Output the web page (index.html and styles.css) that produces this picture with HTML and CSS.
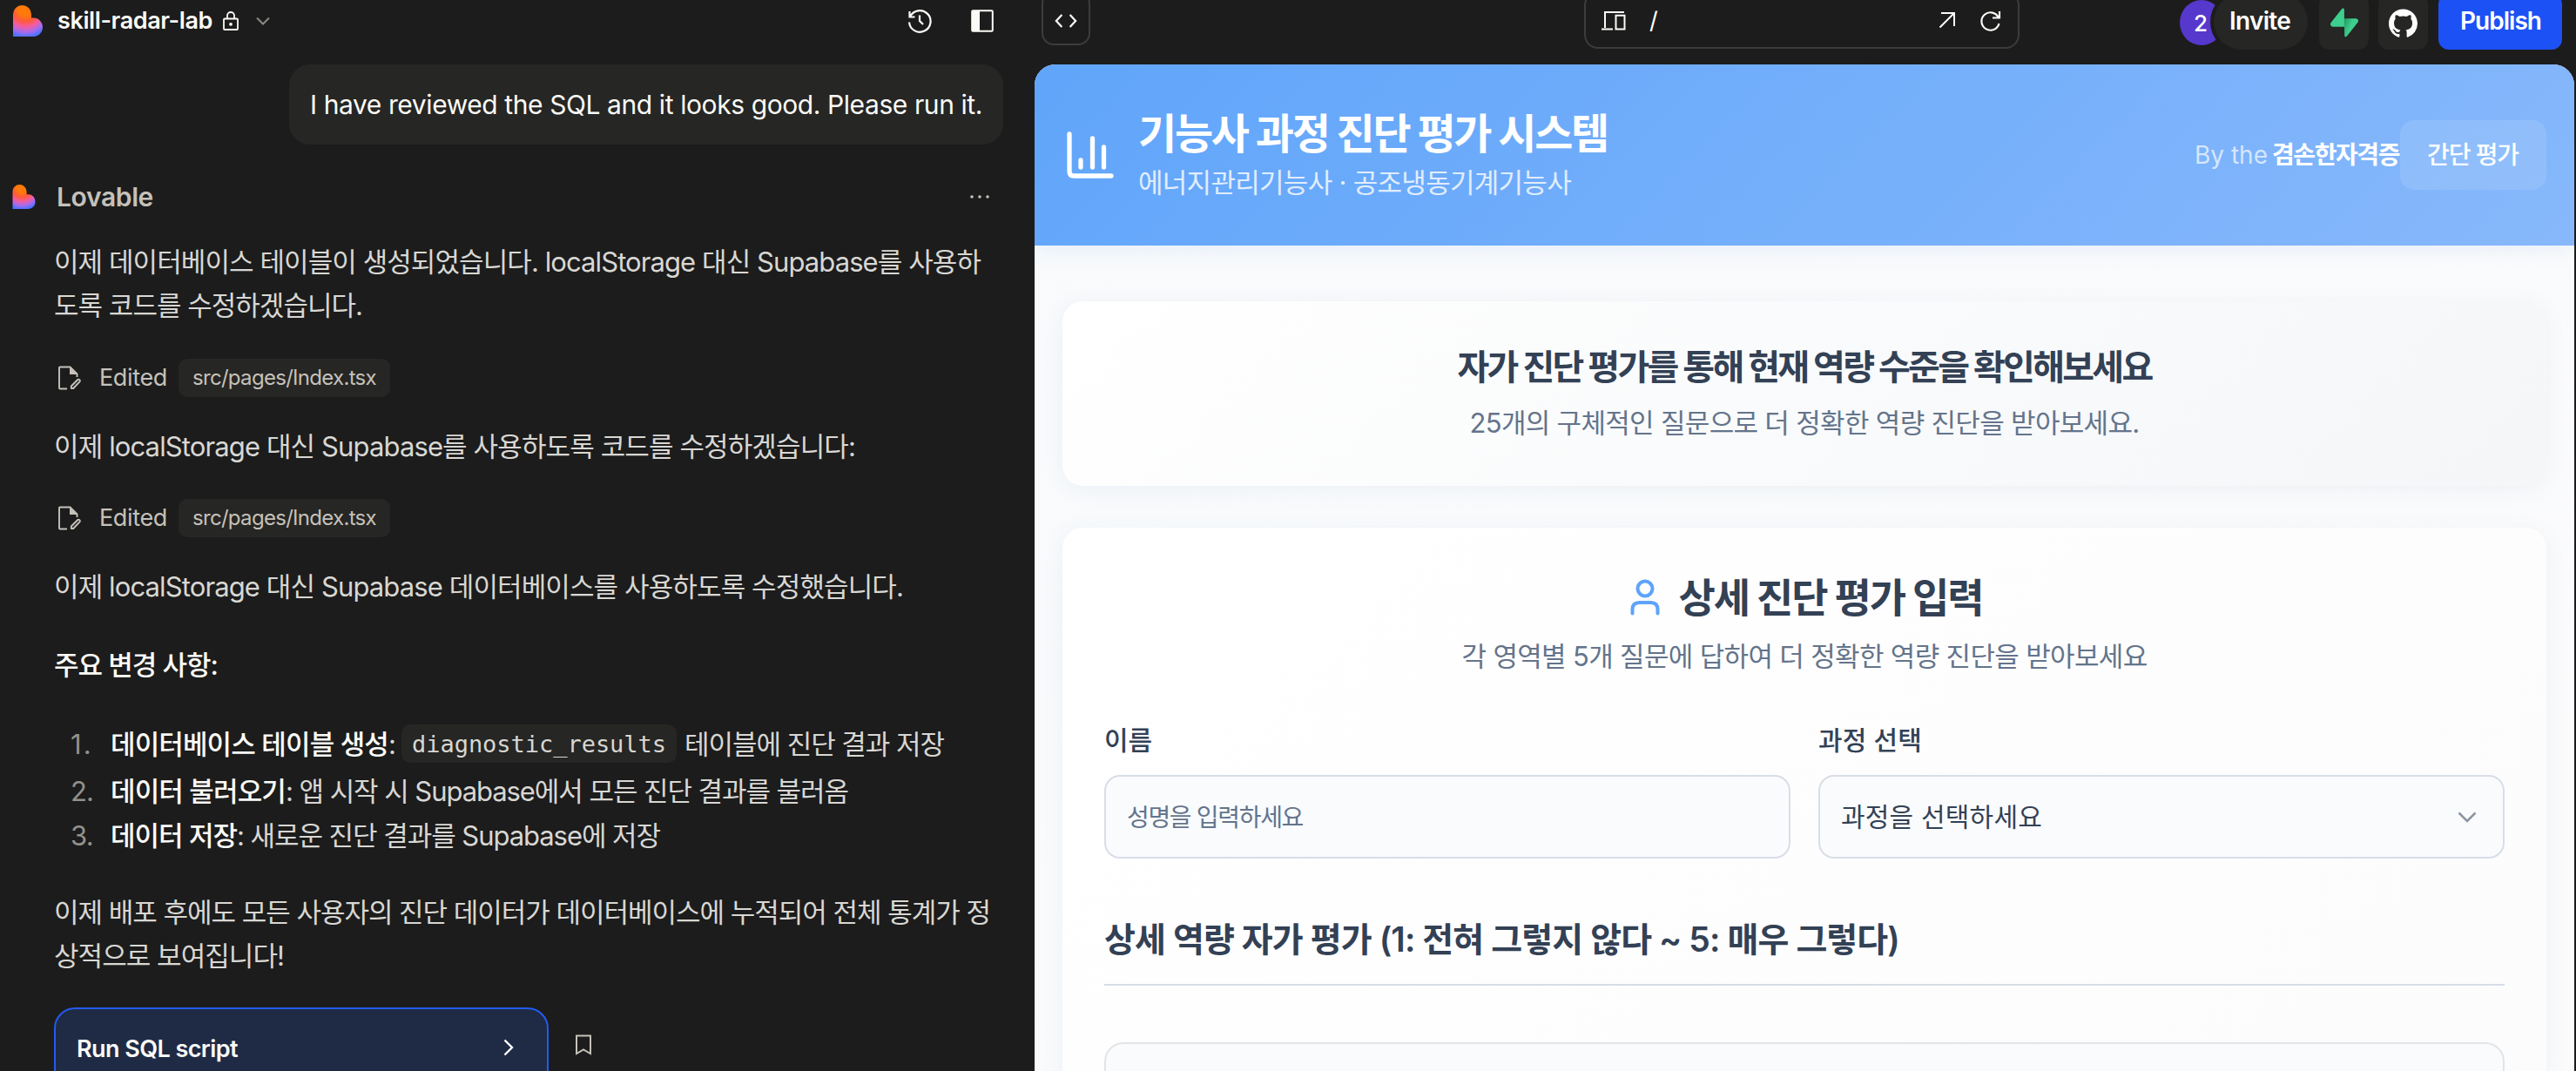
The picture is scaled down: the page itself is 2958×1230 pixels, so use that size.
FILE: index.html
```
<!DOCTYPE html>
<html lang="ko">
<head>
<meta charset="utf-8">
<title>skill-radar-lab</title>
<link rel="stylesheet" href="styles.css">
</head>
<body>
<svg width="0" height="0" class="defs" aria-hidden="true">
  <defs>
    <radialGradient id="heart" cx="42%" cy="8%" r="98%">
      <stop offset="0.25" stop-color="#ff7a0a"/>
      <stop offset="0.45" stop-color="#fe5a3c"/>
      <stop offset="0.62" stop-color="#f45ca0"/>
      <stop offset="0.8" stop-color="#a56cee"/>
      <stop offset="0.95" stop-color="#4b73ff"/>
    </radialGradient>
    <linearGradient id="bolt" x1="0" y1="0" x2="1" y2="0.500"><stop offset="0" stop-color="#249361"/><stop offset="0.55" stop-color="#3ecf8e"/></linearGradient>
    <symbol id="logo" viewBox="0 0 34 36"><path fill="url(#heart)" d="M0 10.500A10.500 10.500 0 0 1 21 10.500V14.500H23.500A10.500 10.700 0 0 1 23.500 36H0Z"/></symbol>
    <symbol id="edit" viewBox="0 0 28 28"><path d="M12 26.500H4Q3 26.500 3 25.500V2.500Q3 1.500 4 1.500H15.500L23.500 9.500V13" fill="none" stroke="currentColor" stroke-width="1.900"/><path d="M15 1.500V10H23.500Z" fill="currentColor"/><path d="M16.800 23.500 24.300 16Q25.300 15.200 26.300 16.200T26.500 18.300L19.200 26H16.800Z" fill="none" stroke="currentColor" stroke-width="1.900" stroke-linejoin="round"/></symbol>
  </defs>
</svg>
<div class="app">
  <section class="chat">
    <header class="chat-top">
      <svg class="brand" viewBox="0 0 34 36"><use href="#logo"/></svg>
      <span class="project t" data-w="178">skill-radar-lab</span>
      <svg class="lock" viewBox="0 0 18 22" fill="none" stroke="#fbfaf6" stroke-width="1.800"><rect x="1" y="8.500" width="16" height="12.500" rx="1"/><path d="M5 8.500V5a4 4 0 0 1 8 0V8.500"/><circle cx="9" cy="14.800" r="1" fill="#fbfaf6"/></svg>
      <svg class="chev" viewBox="0 0 16 10" fill="none" stroke="#8b8985" stroke-width="2"><path d="M1 1.500 8 8.500 15 1.500"/></svg>
      <span class="grow"></span>
      <svg class="history" viewBox="0 0 28 28" fill="none" stroke="#fbfaf6" stroke-width="2.200"><path d="M2.500 3V9.500H8.500M3 9.500A12.300 12.300 0 1 1 2 15.500M14 7.500V14L18 18"/></svg>
      <svg class="panel" viewBox="0 0 26 26"><rect x="1.200" y="1.200" width="23.600" height="23.600" rx="1" fill="none" stroke="#fbfaf6" stroke-width="2"/><path d="M1 1H10V25H1Z" fill="#fbfaf6"/></svg>
    </header>
    <div class="bubble"><span class="t" data-w="772">I have reviewed the SQL and it looks good. Please run it.</span></div>
    <div class="author">
      <svg class="brand-s" viewBox="0 0 34 36"><use href="#logo"/></svg>
      <span class="t" data-w="111">Lovable</span>
      <span class="grow"></span>
      <svg class="dots" viewBox="0 0 24 6" fill="#c5c1ba"><circle cx="3" cy="3" r="1.800"/><circle cx="12" cy="3" r="1.800"/><circle cx="21" cy="3" r="1.800"/></svg>
    </div>
    <div class="msg">
      <p><span class="t" data-w="1064">이제 데이터베이스 테이블이 생성되었습니다. localStorage 대신 Supabase를 사용하</span><span class="t" data-w="354">도록 코드를 수정하겠습니다.</span></p>
      <div class="edited"><svg viewBox="0 0 28 28"><use href="#edit"/></svg><span class="t lbl" data-w="78">Edited</span><span class="file"><span class="t" data-w="211">src/pages/Index.tsx</span></span></div>
      <p class="m2"><span class="t" data-w="920">이제 localStorage 대신 Supabase를 사용하도록 코드를 수정하겠습니다:</span></p>
      <div class="edited"><svg viewBox="0 0 28 28"><use href="#edit"/></svg><span class="t lbl" data-w="78">Edited</span><span class="file"><span class="t" data-w="211">src/pages/Index.tsx</span></span></div>
      <p class="m2"><span class="t" data-w="975">이제 localStorage 대신 Supabase 데이터베이스를 사용하도록 수정했습니다.</span></p>
      <p class="m3 strong"><span class="t" data-w="188">주요 변경 사항:</span></p>
      <ol>
        <li><i class="t" data-w="26">1.</i><b class="t" data-w="319">데이터베이스 테이블 생성</b><span class="t" data-w="8">:</span><code><span class="t" data-w="292">diagnostic_results</span></code><span class="t" data-w="298">테이블에 진단 결과 저장</span></li>
        <li><i class="t" data-w="26">2.</i><b class="t" data-w="201">데이터 불러오기</b><span class="t" data-w="646">: 앱 시작 시 Supabase에서 모든 진단 결과를 불러옴</span></li>
        <li><i class="t" data-w="26">3.</i><b class="t" data-w="145">데이터 저장</b><span class="t" data-w="486">: 새로운 진단 결과를 Supabase에 저장</span></li>
      </ol>
      <p><span class="t" data-w="1075">이제 배포 후에도 모든 사용자의 진단 데이터가 데이터베이스에 누적되어 전체 통계가 정</span><span class="t" data-w="264">상적으로 보여집니다!</span></p>
      <div class="run-row">
        <div class="run"><span class="t" data-w="185">Run SQL script</span><svg viewBox="0 0 12 20" fill="none" stroke="#fff" stroke-width="2.400"><path d="M1.500 1.500 10 10 1.500 18.500"/></svg></div>
        <svg class="mark" viewBox="0 0 20 24" fill="none" stroke="#c5c1ba" stroke-width="2"><path d="M2 1.500H18V22L10 17.500 2 22Z"/></svg>
      </div>
    </div>
  </section>
  <section class="side">
    <header class="bar">
      <div class="code"><svg viewBox="0 0 28 18" fill="none" stroke="#fbfaf6" stroke-width="2.400"><path d="M9 1.500 2 9 9 16.500M19 1.500 26 9 19 16.500"/></svg></div>
      <div class="url">
        <svg class="dev" viewBox="0 0 28 24" fill="none" stroke="#fbfaf6" stroke-width="2"><path d="M4 20V2H26M0 21.500H13M16.500 5.800H26.500V21.500H16.500Z"/></svg>
        <span class="slash">/</span><span class="grow"></span>
        <svg class="open" viewBox="0 0 20 20" fill="none" stroke="#fbfaf6" stroke-width="2"><path d="M3 2H18V17M18 2 1.500 18.500"/></svg>
        <svg class="reload" viewBox="0 0 24 26" fill="none" stroke="#fbfaf6" stroke-width="2.200"><path d="M22 2V9.500H14M21 9.500A10.200 10.200 0 1 0 21.500 16"/></svg>
      </div>
      <div class="acts">
        <div class="ava">2</div>
        <div class="invite"><span class="t" data-w="70">Invite</span></div>
        <div class="sq"><svg class="supa" viewBox="0 0 109 113"><path fill="url(#bolt)" d="M63.700 110.300c-2.900 3.600-8.700 1.600-8.700-3L54 40h45.200c8.200 0 12.800 9.500 7.700 15.900z"/><path fill="#3ecf8e" d="M45.300 2.100c2.900-3.600 8.700-1.600 8.700 3l.4 67.200H9.800c-8.200 0-12.800-9.400-7.700-15.800z"/></svg></div>
        <div class="sq"><svg class="gh" viewBox="0 0 16 16" fill="#fff"><path d="M8 0C3.580 0 0 3.580 0 8c0 3.540 2.290 6.530 5.470 7.590.4.070.55-.17.55-.38 0-.19-.01-.82-.01-1.490-2.010.37-2.530-.49-2.690-.94-.09-.23-.48-.94-.82-1.130-.28-.15-.68-.52-.01-.53.63-.01 1.080.58 1.230.82.72 1.210 1.870.87 2.330.66.070-.52.28-.87.510-1.070-1.780-.2-3.640-.89-3.640-3.950 0-.87.310-1.590.82-2.150-.08-.2-.36-1.020.08-2.120 0 0 .67-.21 2.200.82.64-.18 1.320-.27 2-.27s1.360.09 2 .27c1.530-1.040 2.200-.82 2.200-.82.44 1.100.16 1.920.08 2.120.51.56.82 1.270.82 2.150 0 3.070-1.870 3.750-3.650 3.950.29.25.54.73.54 1.480 0 1.070-.01 1.930-.01 2.200 0 .21.15.46.55.38A8.010 8.010 0 0 0 16 8c0-4.420-3.580-8-8-8z"/></svg></div>
        <div class="publish"><span class="t" data-w="93">Publish</span></div>
      </div>
    </header>
    <main class="preview">
      <div class="hero">
        <svg class="chart" viewBox="0 0 54 54" fill="none" stroke="#fff" stroke-width="5.300" stroke-linecap="round" stroke-linejoin="round"><path d="M3 3V46Q3 51 8 51H51M16 41V33M29.500 41V8M42.500 41V18"/></svg>
        <div class="titles"><h1><span class="t" data-w="539">기능사 과정 진단 평가 시스템</span></h1><p><span class="t" data-w="497">에너지관리기능사 · 공조냉동기계기능사</span></p></div>
        <span class="grow"></span>
        <span class="by"><span class="t" data-w="84">By the</span><b class="t" data-w="146">겸손한자격증</b></span>
        <div class="simple"><span class="t" data-w="105">간단 평가</span></div>
      </div>
      <div class="body">
        <div class="card intro"><h2><span class="t" data-w="797">자가 진단 평가를 통해 현재 역량 수준을 확인해보세요</span></h2><p><span class="t" data-w="769">25개의 구체적인 질문으로 더 정확한 역량 진단을 받아보세요.</span></p></div>
        <div class="card form">
          <div class="fh"><svg viewBox="0 0 34 42" fill="none" stroke="#5ea3fb" stroke-width="4" stroke-linecap="round"><circle cx="17" cy="11" r="8.500"/><path d="M2.500 39.500V35Q2.500 27 10.500 27H23.500Q31.500 27 31.500 35V39.500"/></svg><h2><span class="t" data-w="349">상세 진단 평가 입력</span></h2></div>
          <p class="sub"><span class="t" data-w="787">각 영역별 5개 질문에 답하여 더 정확한 역량 진단을 받아보세요</span></p>
          <div class="fields">
            <div><label><span class="t" data-w="55">이름</span></label><div class="input ph"><span class="t" data-w="202">성명을 입력하세요</span></div></div>
            <div><label><span class="t" data-w="119">과정 선택</span></label><div class="input"><span class="t" data-w="231">과정을 선택하세요</span><svg viewBox="0 0 22 13" fill="none" stroke="#8c95a4" stroke-width="2.500"><path d="M1.500 1.500 11 11 20.500 1.500"/></svg></div></div>
          </div>
          <h3><span class="t" data-w="913">상세 역량 자가 평가 (1: 전혀 그렇지 않다 ~ 5: 매우 그렇다)</span></h3>
          <div class="panel-q"></div>
        </div>
      </div>
    </main>
  </section>
</div>
<script src="fit.js"></script>
</body>
</html>
```
FILE: fit.js
```
// Adjusts tracking so that each label is as wide as its data-w value.
document.querySelectorAll('.t').forEach(function (el) {
  var natural = el.getBoundingClientRect().width;
  var count = Array.from(el.textContent).length;
  el.style.letterSpacing = ((Number(el.dataset.w) - natural) / count) + 'px';
});
```
FILE: styles.css
```
* { box-sizing: border-box; margin: 0; padding: 0; }
html, body { width: 2958px; height: 1230px; overflow: hidden; background: #1c1c1c; }
body { font-family: Inter, "Noto Sans CJK KR", sans-serif; color: #d8d7d3; }
.defs { position: absolute; }
svg { display: block; flex: none; }
.t { display: inline-block; white-space: pre; flex: none; }
.grow { flex: 1; }
.app { display: flex; width: 2958px; height: 1230px; overflow: hidden; }

/* chat column */
.chat { width: 1188px; flex: none; height: 1230px; overflow: hidden; }
.chat-top { display: flex; align-items: center; height: 48px; padding: 0 47px 0 15px; }
.brand { width: 34px; height: 36px; }
.project { margin-left: 17px; font: 600 27px/48px Inter, sans-serif; color: #fbfaf6; }
.lock { width: 18px; height: 22px; margin-left: 12px; }
.chev { width: 16px; height: 10px; margin-left: 20px; }
.history { width: 28px; height: 28px; }
.panel { width: 26px; height: 26px; margin-left: 45px; }
.bubble { width: 820px; height: 92px; margin: 26px 0 0 332px; padding-left: 24px; border-radius: 24px; background: #262624; color: #fbfaf6; font: 400 30px/93px Inter, sans-serif; }
.author { display: flex; align-items: center; height: 48px; margin-top: 36px; padding: 0 51px 0 14px; font: 600 30px/48px Inter, sans-serif; color: #c5c1ba; }
.brand-s { width: 27px; height: 28px; margin-right: 24px; }
.dots { width: 24px; height: 6px; }
.msg { padding: 26px 0 0 62px; font-size: 31px; line-height: 50px; }
.msg p { display: flex; flex-direction: column; align-items: flex-start; font-weight: 400; }
.msg p .t { height: 50px; }
.edited { display: flex; align-items: center; height: 44px; margin-top: 36px; color: #c5c1ba; }
.edited svg { width: 28px; height: 28px; margin-left: 3px; }
.lbl { margin-left: 21px; font-size: 27px; }
.file { height: 44px; margin-left: 13px; padding: 0 16px; border-radius: 10px; background: #262624; font-size: 24px; line-height: 44px; }
.msg .m2 { margin-top: 32px; }
.edited + .m2 + .edited { margin-top: 35px; }
.msg .m3 { margin-top: 40px; }
.msg .strong { font-weight: 500; color: #fbfaf6; }
ol { list-style: none; margin: 41px 0 37px; }
li { display: flex; height: 51px; line-height: 50px; padding-left: 19px; }
li:first-child { height: 54px; }
li i { font-style: normal; color: #93918c; margin-right: 20px; }
li b { font-weight: 500; color: #fbfaf6; }
code { height: 44px; margin: 2px 9px 0 7px; padding: 0 12px; border-radius: 10px; background: #262624; font: 27px/46px "DejaVu Sans Mono", monospace; }
.run-row { display: flex; align-items: flex-start; margin-top: 34px; }
.run { display: flex; justify-content: space-between; width: 568px; height: 110px; padding: 21px 38px 0 24px; border: 2px solid #245bf0; border-radius: 24px; background: #1f2b45; color: #fbfaf6; font: 600 27px/50px Inter, sans-serif; }
.run svg { width: 12px; height: 20px; margin-top: 13px; }
.mark { width: 20px; height: 24px; margin: 31px 0 0 30px; }

/* preview toolbar */
.side { width: 1770px; flex: none; }
.bar { display: flex; align-items: flex-start; height: 74px; padding-left: 8px; overflow: hidden; }
.code { width: 56px; height: 62px; margin-top: -10px; padding: 23px 13px; border: 2px solid #3c3c3a; border-radius: 14px; }
.code svg { width: 26px; height: 18px; }
.url { display: flex; align-items: center; width: 500px; height: 66px; margin: -10px 0 0 567px; padding: 2px 19px 0 18px; border: 2px solid #3c3c3a; border-radius: 16px; }
.dev { width: 28px; height: 24px; }
.slash { margin-left: 27px; font: 27px/40px Inter, sans-serif; color: #fff; }
.open { width: 20px; height: 20px; margin-top: -2px; }
.reload { width: 24px; height: 26px; margin-left: 28px; }
.acts { display: flex; margin-left: 184px; }
.ava { width: 50px; height: 52px; border-radius: 50%; background: #5638cc; color: #fff; font: 500 26px/54px Inter, sans-serif; text-align: center; margin-right: -11px; padding-right: 2px; }
.invite { z-index: 1; width: 108px; height: 64px; margin-top: -7px; padding-left: 18px; border-radius: 32px; background: #262624; box-shadow: 0 0 0 4px #1c1c1c; font: 600 28px/63px Inter, sans-serif; color: #fff; }
.sq { display: flex; align-items: center; justify-content: center; width: 57px; height: 64px; margin: -7px 0 0 13px; border-radius: 12px; background: #262624; }
.sq + .sq { margin-left: 11px; }
.supa { width: 32px; height: 36px; margin-top: 2px; }
.gh { width: 33px; height: 34px; margin-top: 3px; }
.publish { width: 142px; height: 64px; margin: -7px 0 0 12px; padding-left: 25px; border-radius: 12px; background: #1c51f5; color: #fff; font: 600 28px/63px Inter, sans-serif; }

/* previewed page */
.preview { width: 1768px; height: 1156px; overflow: hidden; border-radius: 24px 24px 0 0; background: linear-gradient(135deg, #f8fafc, #fbfbfc); color: #334155; }
.hero { position: relative; display: flex; align-items: center; height: 208px; padding: 0 32px 0 37px; background: linear-gradient(135deg, #60a5fa, #87b8fb); color: #fff; box-shadow: 0 2px 24px rgba(96, 150, 220, .14); }
.chart { width: 54px; height: 54px; }
.titles { margin-left: 28px; }
.titles h1 { font-size: 48px; font-weight: 700; line-height: 58px; height: 60px; }
.titles p { font-size: 31px; line-height: 50px; height: 46px; color: #e1edfd; }
.by { display: flex; font-size: 28px; line-height: 50px; }
.by .t { color: #d5e6fd; margin-right: 5px; }
.by b.t { color: #fff; margin-right: 1px; }
.simple { width: 168px; height: 80px; padding-left: 31px; border-radius: 16px; background: rgba(255, 255, 255, .11); font-size: 28px; font-weight: 500; line-height: 80px; }
.body { padding: 64px 32px 0; }
.card { width: 1704px; border-radius: 24px; box-shadow: 0 4px 24px rgba(70, 110, 160, .07); }
.intro { height: 212px; padding-top: 51px; background: linear-gradient(135deg, #fff, #f4f6f8); text-align: center; }
.intro h2 { font-size: 40px; font-weight: 700; line-height: 50px; height: 50px; }
.intro p { margin-top: 14px; font-size: 31px; line-height: 50px; color: #64748b; }
.form { height: 800px; margin-top: 48px; padding: 48px; background: linear-gradient(135deg, #fff, #fcfcfd); }
.fh { display: flex; justify-content: center; align-items: center; height: 64px; padding-left: 4px; }
.fh svg { width: 34px; height: 42px; margin-right: 22px; }
.fh h2 { font-size: 46px; font-weight: 700; line-height: 62px; }
.sub { height: 50px; margin-top: 11px; text-align: center; font-size: 31px; line-height: 50px; color: #64748b; }
.fields { display: grid; grid-template-columns: 788px 788px; gap: 32px; margin-top: 48px; }
label { display: block; height: 50px; font-size: 30px; font-weight: 500; line-height: 47px; }
.input { display: flex; justify-content: space-between; align-items: center; height: 96px; margin-top: 13px; padding: 0 30px 0 24px; border: 2px solid #d8dee6; border-radius: 18px; background: #fafbfd; font-size: 30px; line-height: 92px; }
.input svg { width: 22px; height: 13px; }
.ph { padding-top: 2px; font-size: 28px; color: #64748b; }
h3 { height: 97px; margin-top: 49px; border-bottom: 2px solid #d8dee6; font-size: 39px; font-weight: 600; line-height: 88px; }
.panel-q { height: 120px; margin-top: 65px; border: 2px solid #e1e5e8; border-radius: 22px; background: #fafbfc; }
```
